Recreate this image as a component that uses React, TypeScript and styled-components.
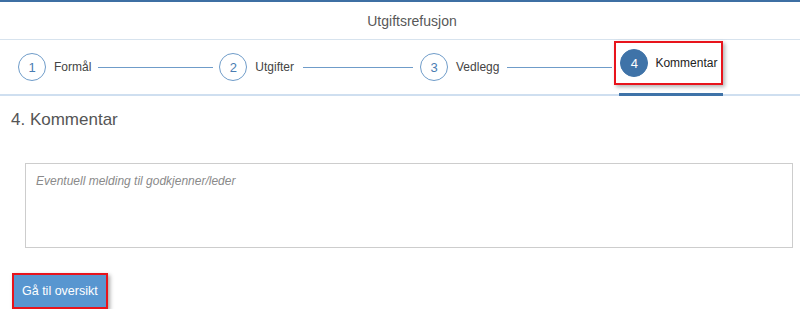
import React from "react";
import styled, { createGlobalStyle } from "styled-components";

const GlobalStyle = createGlobalStyle`
  html, body {
    margin: 0;
    padding: 0;
    background: #ffffff;
  }
  body {
    font-family: "Liberation Sans", Arial, sans-serif;
    color: #555;
  }
`;

const Page = styled.div`
  border-top: 2px solid #3d6fa3;
  width: 800px;
`;

const Header = styled.header`
  height: 37px;
  display: flex;
  align-items: center;
  justify-content: center;
  padding-left: 24px;
  font-size: 14px;
  color: #585858;
  border-bottom: 1px solid #d7e3ee;
`;

const Stepper = styled.nav`
  height: 54px;
  display: flex;
  align-items: stretch;
  padding-left: 18px;
  border-bottom: 2px solid #cfdff0;
`;

const Step = styled.div<{ $active?: boolean }>`
  position: relative;
  display: flex;
  align-items: center;
  ${(p) =>
    p.$active &&
    `
    &::after {
      content: "";
      position: absolute;
      left: 5px;
      right: 0;
      bottom: -2px;
      height: 3px;
      background: #3f73a8;
    }
  `}
`;

const Highlight = styled.div`
  display: flex;
  align-items: center;
  gap: 7px;
  height: 40px;
  margin-top: -8px;
  padding: 0 4px;
  border: 2px solid #e8141c;
  box-shadow: 2px 2px 4px rgba(0, 0, 0, 0.3);
`;

const Plain = styled.div`
  display: flex;
  align-items: center;
  gap: 8px;
`;

const Circle = styled.span<{ $active?: boolean }>`
  width: 28px;
  height: 28px;
  box-sizing: border-box;
  border-radius: 50%;
  display: flex;
  align-items: center;
  justify-content: center;
  font-size: 13px;
  border: 1px solid ${(p) => (p.$active ? "#3f73a8" : "#6f9cc9")};
  background: ${(p) => (p.$active ? "#3f73a8" : "#fff")};
  color: ${(p) => (p.$active ? "#fff" : "#4a7db2")};
`;

const Label = styled.span<{ $active?: boolean }>`
  font-size: 12px;
  color: ${(p) => (p.$active ? "#222" : "#444")};
`;

const Connector = styled.span<{ $w: number; $l: number; $r: number }>`
  align-self: center;
  height: 1px;
  width: ${(p) => p.$w}px;
  margin: 0 ${(p) => p.$r}px 0 ${(p) => p.$l}px;
  background: #6f9cc9;
`;

const Content = styled.main`
  padding: 13px 8px 0 11px;
`;

const Title = styled.h2`
  margin: 0;
  font-size: 17px;
  font-weight: normal;
  color: #555;
  line-height: 22px;
`;

const Comment = styled.textarea`
  display: block;
  box-sizing: border-box;
  margin: 32px 0 0 14px;
  width: 768px;
  height: 85px;
  padding: 10px 10px;
  border: 1px solid #cdcdcd;
  resize: none;
  font-family: "Liberation Sans", Arial, sans-serif;
  font-size: 12px;
  outline: none;
  &::placeholder {
    font-style: italic;
    color: #8a8a8a;
  }
`;

const Button = styled.button`
  display: block;
  margin: 25px 0 0 1px;
  height: 36px;
  padding: 0 8px;
  border: 2px solid #e8141c;
  background: #5896d0;
  color: #fff;
  font-family: "Liberation Sans", Arial, sans-serif;
  font-size: 12.5px;
  box-shadow: 2px 2px 4px rgba(0, 0, 0, 0.35);
  cursor: pointer;
`;

const steps = ["Formål", "Utgifter", "Vedlegg", "Kommentar"];
const connectors = [
  { w: 115, l: 7, r: 6 },
  { w: 110, l: 9, r: 7 },
  { w: 105, l: 8, r: 2 },
];

export default function App() {
  const active = 3;
  return (
    <>
      <GlobalStyle />
      <Page>
        <Header>Utgiftsrefusjon</Header>
        <Stepper>
          {steps.map((s, i) => {
            const isActive = i === active;
            const Inner = isActive ? Highlight : Plain;
            return (
              <React.Fragment key={s}>
                <Step $active={isActive}>
                  <Inner>
                    <Circle $active={isActive}>{i + 1}</Circle>
                    <Label $active={isActive}>{s}</Label>
                  </Inner>
                </Step>
                {i < connectors.length && (
                  <Connector
                    $w={connectors[i].w}
                    $l={connectors[i].l}
                    $r={connectors[i].r}
                  />
                )}
              </React.Fragment>
            );
          })}
        </Stepper>
        <Content>
          <Title>4. Kommentar</Title>
          <Comment placeholder="Eventuell melding til godkjenner/leder" />
          <Button>Gå til oversikt</Button>
        </Content>
      </Page>
    </>
  );
}
